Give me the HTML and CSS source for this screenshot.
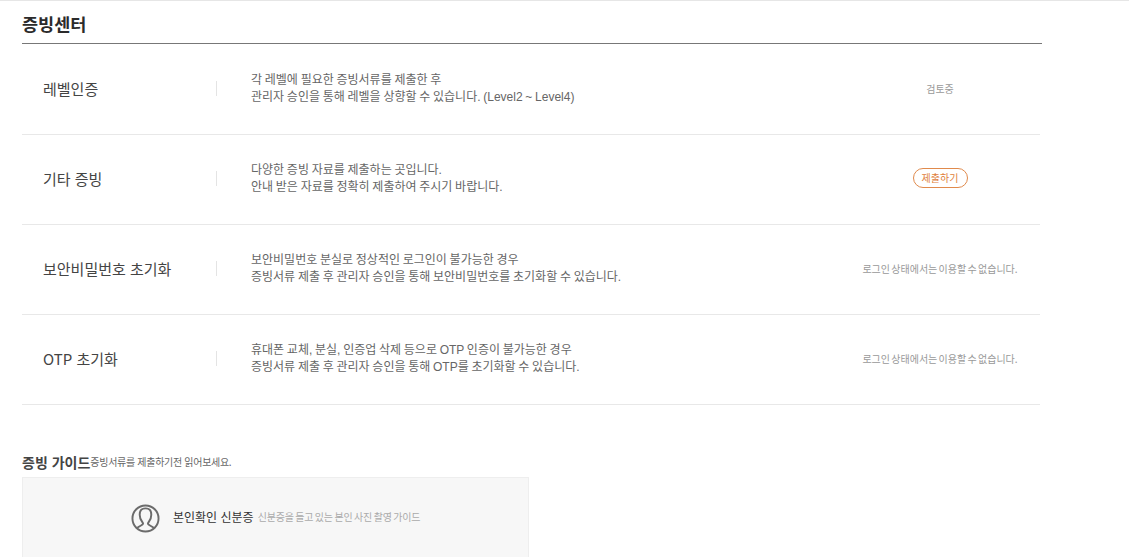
FILE: index.html
```html
<!DOCTYPE html>
<html lang="ko">
<head>
<meta charset="utf-8">
<title>증빙센터</title>
<link rel="stylesheet" href="styles.css">
</head>
<body>
<main class="page">
  <h1 class="title">증빙센터</h1>
  <section class="list">
    <div class="row">
      <div class="name">레벨인증</div>
      <div class="desc">각 레벨에 필요한 증빙서류를 제출한 후<br>관리자 승인을 통해 레벨을 상향할 수 있습니다. (Level2 ~ Level4)</div>
      <div class="state">검토중</div>
    </div>
    <div class="row">
      <div class="name">기타 증빙</div>
      <div class="desc">다양한 증빙 자료를 제출하는 곳입니다.<br>안내 받은 자료를 정확히 제출하여 주시기 바랍니다.</div>
      <div class="state"><a class="btn">제출하기</a></div>
    </div>
    <div class="row">
      <div class="name">보안비밀번호 초기화</div>
      <div class="desc">보안비밀번호 분실로 정상적인 로그인이 불가능한 경우<br>증빙서류 제출 후 관리자 승인을 통해 보안비밀번호를 초기화할 수 있습니다.</div>
      <div class="state">로그인 상태에서는 이용할 수 없습니다.</div>
    </div>
    <div class="row">
      <div class="name">OTP 초기화</div>
      <div class="desc">휴대폰 교체, 분실, 인증업 삭제 등으로 OTP 인증이 불가능한 경우<br>증빙서류 제출 후 관리자 승인을 통해 OTP를 초기화할 수 있습니다.</div>
      <div class="state">로그인 상태에서는 이용할 수 없습니다.</div>
    </div>
  </section>
  <h2 class="guide-title"><strong>증빙 가이드</strong><span>증빙서류를 제출하기전 읽어보세요.</span></h2>
  <div class="guide">
    <svg class="guide-icon" width="29" height="29" viewBox="0 0 30 30" fill="none" stroke="#6b6b6b" stroke-width="2">
      <circle cx="15" cy="15" r="13.500"/>
      <path d="M6 25c3-2.500 6-3 6.500-4.500 0-2-3.500-3.500-3.500-9.500 0-4.500 2.500-6.500 6-6.500s6 2 6 6.500c0 6-3.500 7.500-3.500 9.500.5 1.500 3.500 2 6.500 4.500"/>
    </svg>
    <b class="guide-name">본인확인 신분증</b>
    <span class="guide-note">신분증을 들고 있는 본인 사진 촬영 가이드</span>
  </div>
</main>
</body>
</html>
```
FILE: styles.css
```css
* { box-sizing: border-box; }
html, body { margin: 0; padding: 0; height: 557px; overflow: hidden; background: #fff; }
body { border-top: 1px solid #e6e6e6; font-family: "Noto Sans CJK KR", "Noto Sans", sans-serif; color: #555; }
.page { width: 1042px; padding-left: 22px; }
.title { margin: 0; height: 43px; padding-top: 10px; font-size: 17.5px; line-height: 26px; font-weight: 700; color: #2b2b2b; border-bottom: 1px solid #777; }
.list { width: 1018px; padding-top: 1px; }
.row { display: flex; align-items: center; height: 90px; padding-bottom: 2px; border-bottom: 1px solid #e8e8e8; }
.name { width: 195px; padding-left: 21px; font-size: 15px; color: #444; border-right: 1px solid #e4e4e4; line-height: 15px; }
.desc { width: 623px; padding-left: 34px; font-family: "Liberation Sans", "Noto Sans CJK KR", sans-serif; font-size: 12px; line-height: 17px; word-spacing: -0.6px; color: #666; }
.state { flex: 1; padding-bottom: 1px; text-align: center; font-size: 10px; word-spacing: -1.500px; color: #999; white-space: nowrap; }
.btn { display: inline-block; width: 55px; height: 20px; border: 1px solid #e08a4c; border-radius: 10px; line-height: 18px; color: #e0803c; }
.guide-title { margin: 41px 0 0; height: 31px; font-weight: 400; line-height: 18px; display: flex; align-items: center; }
.guide-title strong { font-size: 14px; font-weight: 700; color: #444; }
.guide-title span { font-size: 10px; letter-spacing: -0.3px; color: #666; }
.guide { display: flex; align-items: flex-start; width: 507px; height: 120px; padding: 26px 0 0 108px; background: #f7f7f7; border: 1px solid #eee; }
.guide-icon { margin-right: 13px; flex: none; }
.guide-name { font-size: 12px; font-weight: 400; line-height: 26px; color: #333; margin-right: 4px; }
.guide-note { font-size: 10px; line-height: 26px; letter-spacing: -0.2px; word-spacing: -1px; color: #aaa; }
```
